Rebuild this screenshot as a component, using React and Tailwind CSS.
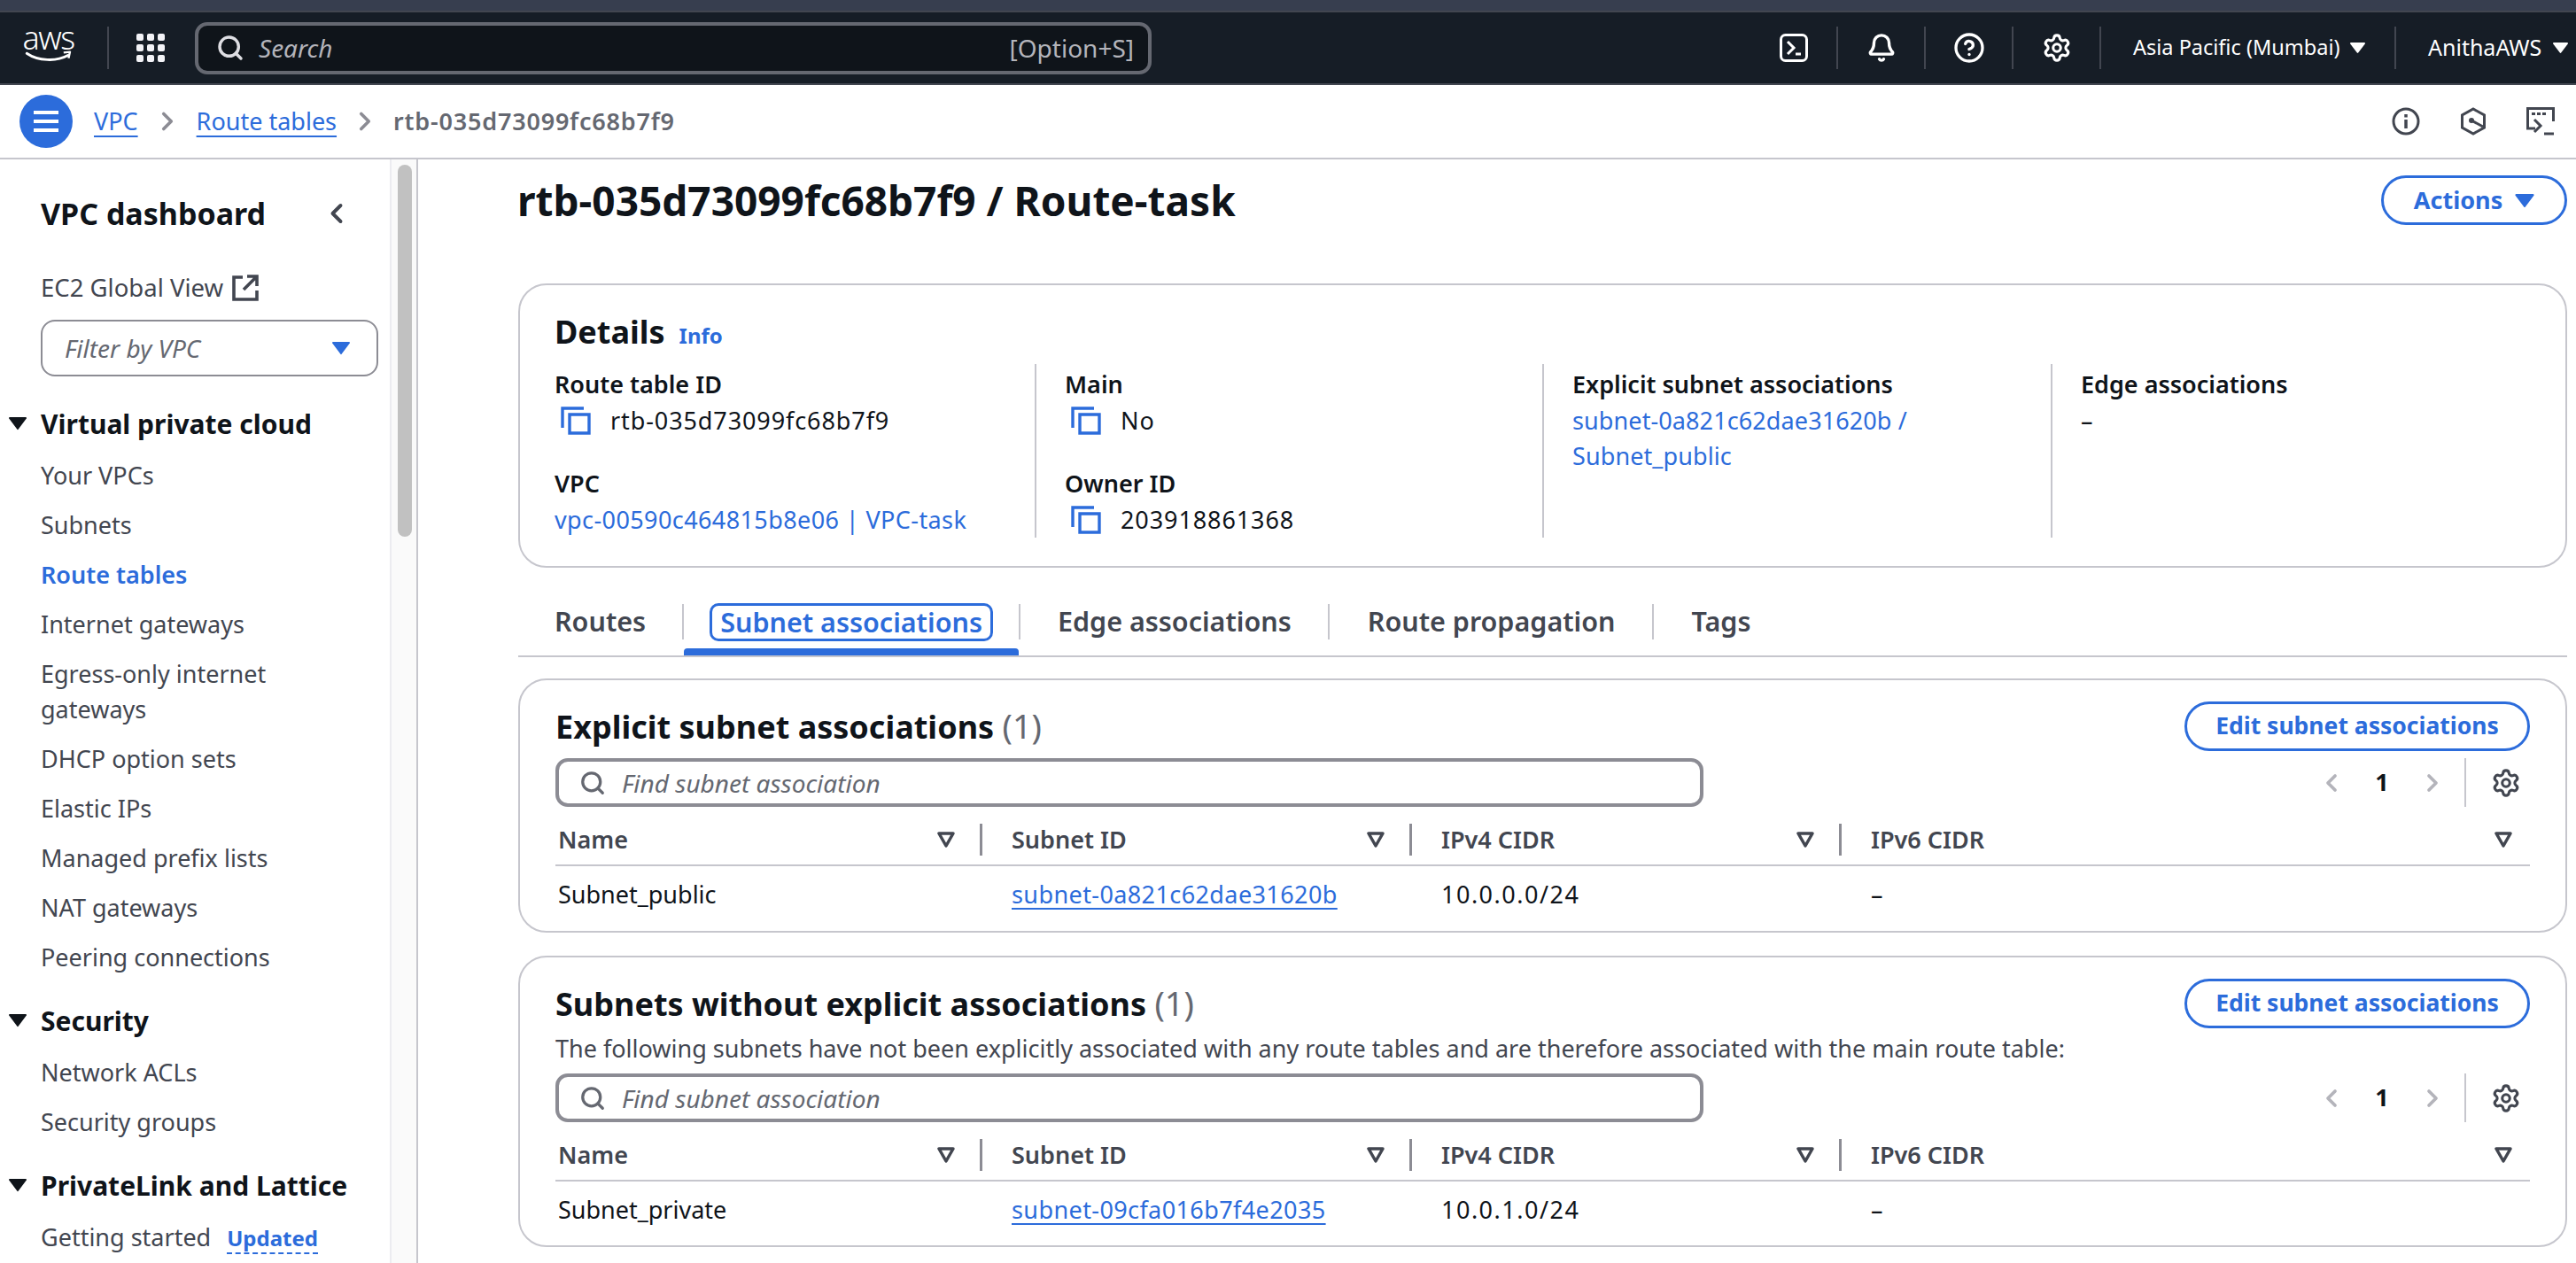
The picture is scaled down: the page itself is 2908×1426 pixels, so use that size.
import { Bell, ChevronLeft, ChevronRight, CircleHelp, Search, Settings } from "lucide-react";

const sideGroups = [
  { title: "Virtual private cloud", items: ["Your VPCs", "Subnets", "Route tables", "Internet gateways", "Egress-only internet gateways", "DHCP option sets", "Elastic IPs", "Managed prefix lists", "NAT gateways", "Peering connections"] },
  { title: "Security", items: ["Network ACLs", "Security groups"] },
  { title: "PrivateLink and Lattice", items: ["Getting started"] },
];

function Caret({ className }) {
  return (
    <svg viewBox="0 0 20 16" className={className} fill="currentColor">
      <path d="M1 1h18a1 1 0 0 1 .8 1.6l-9 12a1 1 0 0 1-1.6 0l-9-12A1 1 0 0 1 1 1z" />
    </svg>
  );
}

function FilterCaret() {
  return (
    <svg viewBox="0 0 20 18" className="w-[20px] h-[18px] text-[#424650]" fill="none" stroke="currentColor" strokeWidth="3.5" strokeLinejoin="round">
      <path d="M2 2h16l-8 14z" />
    </svg>
  );
}

function CopyIcon() {
  return (
    <svg viewBox="0 0 34 32" className="w-[34px] h-[32px] text-[#2c6cdb] shrink-0" fill="none" stroke="currentColor" strokeWidth="3.4">
      <path d="M2 24V2h24" />
      <path d="M10 9h22v21H10z" />
    </svg>
  );
}

function Sidebar() {
  return (
    <aside className="w-[440px] shrink-0 text-[#424650] text-[27px] overflow-hidden">
      <div className="flex items-center justify-between pl-[46px] pr-[42px] pt-[16px] h-[106px]">
        <h2 className="text-[34px] font-bold text-[#0f141a] leading-[48px]">VPC dashboard</h2>
        <ChevronLeft className="w-[36px] h-[36px] text-[#424650]" strokeWidth={2.6} />
      </div>
      <div className="pl-[46px] h-[44px] mt-[17px] flex items-center gap-[10px] leading-[36px] text-[27.5px]">
        EC2 Global View
        <svg viewBox="0 0 30 30" className="w-[30px] h-[30px]" fill="none" stroke="currentColor" strokeWidth="3.6">
          <path d="M12 3H2v25h26V18" />
          <path d="M17 2h11v11M28 2L13 17" />
        </svg>
      </div>
      <div className="ml-[46px] mt-[14px] w-[381px] h-[64px] border-2 border-[#8c8c94] rounded-[16px] flex items-center justify-between pl-[25px] pr-[30px]">
        <span className="italic text-[#656871] text-[28px]">Filter by VPC</span>
        <Caret className="w-[20px] h-[16px] text-[#2c6cdb]" />
      </div>
      <div className="mt-[30px]">
        {sideGroups.map((g) => (
          <div key={g.title} className="mb-[20px]">
            <div className="flex items-center h-[46px] pl-[10px]">
              <Caret className="w-[20px] h-[16px] text-[#0f141a] mr-[16px]" />
              <span className="text-[30px] font-bold text-[#0f141a]">{g.title}</span>
            </div>
            <ul className="mt-[8px] pl-[46px] pr-[60px]">
              {g.items.map((it) => (
                <li key={it} className={`py-[8px] leading-[40px] ${it === "Route tables" ? "text-[#2c6cdb] font-semibold" : ""}`}>
                  {it}
                  {it === "Getting started" && (
                    <span className="ml-[18px] text-[24px] font-bold text-[#2c6cdb] border-b-2 border-dashed border-[#2c6cdb]">Updated</span>
                  )}
                </li>
              ))}
            </ul>
          </div>
        ))}
      </div>
    </aside>
  );
}

function HeaderCell({ label, width, last }) {
  return (
    <div className={`${width} flex items-center h-[36px]`}>
      <span className={`flex-1 text-[27px] font-semibold text-[#424650] ${label === "Name" ? "pl-[3px]" : "pl-[33px]"}`}>{label}</span>
      <span className={last ? "mr-[20px]" : "mr-[28px]"}><FilterCaret /></span>
      {!last && <span className="w-[3px] h-[36px] bg-[#8c8c94]" />}
    </div>
  );
}

function SubnetTable({ title, desc, name, subnet, cidr, cardClass }) {
  return (
    <section className={`border-2 border-[#c6c6cd] rounded-[32px] pl-[40px] pr-[40px] ${cardClass}`}>
      <div className="flex items-start justify-between pt-[24px]">
        <div>
          <h3 className="text-[36px] font-bold text-[#0f141a] leading-[60px] -mt-[3px]">
            {title} <span className="font-normal text-[38px] text-[#656871]">(1)</span>
          </h3>
          {desc && <p className="text-[27px] text-[#424650] leading-[38px] mt-[1px]">{desc}</p>}
        </div>
        <button className="w-[390px] h-[56px] border-[3px] border-[#2c6cdb] rounded-full text-[26.5px] font-bold text-[#2c6cdb] shrink-0">Edit subnet associations</button>
      </div>
      <div className={`flex items-center justify-between ${desc ? "mt-[9px]" : "mt-[5px]"}`}>
        <div className="w-[1296px] h-[55px] border-[4px] border-[#8c8c94] rounded-[14px] flex items-center pl-[23px] gap-[18px]">
          <Search className="w-[30px] h-[30px] text-[#656871]" strokeWidth={2.6} />
          <span className="italic text-[28px] text-[#656871]">Find subnet association</span>
        </div>
        <div className="flex items-center h-[55px]">
          <ChevronLeft className="w-[32px] h-[38px] text-[#b4b4bb]" strokeWidth={2.8} />
          <span className="w-[82px] text-center text-[27px] font-bold text-[#0f141a]">1</span>
          <ChevronRight className="w-[32px] h-[38px] text-[#b4b4bb]" strokeWidth={2.8} />
          <span className="w-[2px] h-[55px] bg-[#c6c6cd] ml-[20px] mr-[28px]" />
          <Settings className="w-[34px] h-[34px] text-[#424650] mr-[10px]" strokeWidth={2.2} />
        </div>
      </div>
      <div className="flex items-center h-[67px] pt-[9px] border-b-2 border-[#c6c6cd]">
        <HeaderCell label="Name" width="w-[482px]" />
        <HeaderCell label="Subnet ID" width="w-[485px]" />
        <HeaderCell label="IPv4 CIDR" width="w-[485px]" />
        <HeaderCell label="IPv6 CIDR" width="flex-1" last />
      </div>
      <div className="flex items-center h-[64px] text-[27px] text-[#0f141a]">
        <div className="w-[482px] pl-[3px]">{name}</div>
        <div className="w-[485px] pl-[33px]"><a className="text-[#2c6cdb] underline underline-offset-[5px] decoration-2 tracking-[0.4px]">{subnet}</a></div>
        <div className="w-[485px] pl-[33px] tracking-[1.5px]">{cidr}</div>
        <div className="flex-1 pl-[33px]">–</div>
      </div>
    </section>
  );
}

function DetailField({ label, children, className }) {
  return (
    <div className={className}>
      <div className="text-[27px] font-semibold text-[#0f141a] leading-[38px]">{label}</div>
      <div className="text-[27px] leading-[40px] mt-[2px] text-[#0f141a]">{children}</div>
    </div>
  );
}

function Copyable({ value }) {
  return (
    <span className="flex items-center gap-[22px] pl-[7px] tracking-[0.9px]">
      <CopyIcon />
      {value}
    </span>
  );
}

export default function App() {
  const tabs = ["Routes", "Subnet associations", "Edge associations", "Route propagation", "Tags"];
  const tabPad = ["pl-[41px]", "pl-[41px]", "pl-[42px]", "pl-[43px]", "pl-[43px]"];
  return (
    <div className="h-[1426px] w-full overflow-hidden bg-white flex flex-col font-['Noto_Sans',sans-serif]">
      <div className="h-[12px] bg-[#373e4f] shrink-0" />
      <header className="h-[84px] shrink-0 bg-[#161d26] border-y-2 border-[#424650] flex items-center text-white">
        <div className="w-[121px] h-full flex flex-col items-center justify-center pr-[12px]">
          <span className="text-[36px] leading-[26px] font-light tracking-[-1.5px] -mt-[6px]">aws</span>
          <svg viewBox="0 0 66 20" className="w-[64px] h-[16px] mt-[1px]" fill="none">
            <path d="M2 4c16 11 42 12 58 3" stroke="white" strokeWidth="3.6" strokeLinecap="round" />
            <path d="M54 3l9-1-2 9" stroke="white" strokeWidth="3" strokeLinejoin="round" />
          </svg>
        </div>
        <span className="w-[2px] h-[48px] bg-[#424650]" />
        <div className="grid grid-cols-3 gap-[4px] w-[32px] ml-[31px] mr-[34px]">
          {[1, 2, 3, 4, 5, 6, 7, 8, 9].map((n) => (
            <span key={n} className="w-[8px] h-[8px] rounded-[2px] bg-[#f3f3f7]" />
          ))}
        </div>
        <div className="w-[1080px] h-[59px] bg-[#0f141a] border-[4px] border-[#656871] rounded-[14px] flex items-center pl-[20px] pr-[16px]">
          <Search className="w-[32px] h-[32px] text-[#dedee3]" strokeWidth={2.6} />
          <span className="italic text-[28px] text-[#b4b4bb] ml-[16px]">Search</span>
          <span className="ml-auto text-[28px] text-[#b4b4bb]">[Option+S]</span>
        </div>
        <div className="flex-1" />
        <div className="flex items-center h-[48px]">
          <div className="w-[99px] h-full border-r-2 border-[#424650] flex items-center justify-center">
            <svg viewBox="0 0 32 32" className="w-[32px] h-[32px]" fill="none" stroke="white" strokeWidth="3">
              <rect x="1.5" y="1.5" width="29" height="29" rx="5" />
              <path d="M9 9l7 7-7 7M18 23h6" />
            </svg>
          </div>
          <div className="w-[99px] h-full border-r-2 border-[#424650] flex items-center justify-center"><Bell className="w-[34px] h-[34px]" strokeWidth={2.4} /></div>
          <div className="w-[99px] h-full border-r-2 border-[#424650] flex items-center justify-center"><CircleHelp className="w-[36px] h-[36px]" strokeWidth={2.2} /></div>
          <div className="w-[99px] h-full border-r-2 border-[#424650] flex items-center justify-center"><Settings className="w-[34px] h-[34px]" strokeWidth={2.2} /></div>
          <div className="w-[333px] h-full border-r-2 border-[#424650] flex items-center pl-[36px] gap-[11px] text-[23.5px]">
            Asia Pacific (Mumbai)
            <Caret className="w-[17px] h-[14px]" />
          </div>
          <div className="w-[203px] h-full flex items-center pl-[36px] gap-[13px] text-[25px]">
            AnithaAWS
            <Caret className="w-[17px] h-[14px]" />
          </div>
        </div>
      </header>
      <div className="h-[84px] shrink-0 border-b-2 border-[#c6c6cd] flex items-center pl-[22px] pr-[24px]">
        <div className="w-[60px] h-[60px] rounded-full bg-[#2c6cdb] flex flex-col items-center justify-center gap-[6px]">
          <span className="w-[28px] h-[4px] bg-white" />
          <span className="w-[28px] h-[4px] bg-white" />
          <span className="w-[28px] h-[4px] bg-white" />
        </div>
        <a className="ml-[24px] text-[27px] text-[#2c6cdb] underline underline-offset-[6px] decoration-2">VPC</a>
        <ChevronRight className="w-[34px] h-[42px] text-[#8c8c94] mx-[16px]" strokeWidth={2.6} />
        <a className="text-[27px] text-[#2c6cdb] underline underline-offset-[6px] decoration-2">Route tables</a>
        <ChevronRight className="w-[34px] h-[42px] text-[#8c8c94] mx-[15px]" strokeWidth={2.6} />
        <span className="text-[27px] font-semibold text-[#656871] tracking-[0.8px]">rtb-035d73099fc68b7f9</span>
        <div className="ml-auto flex items-center gap-[44px] text-[#424650]">
          <svg viewBox="0 0 32 32" className="w-[32px] h-[32px]" fill="none" stroke="currentColor" strokeWidth="3">
            <circle cx="16" cy="16" r="14" />
            <path d="M16 14v10" strokeWidth="3.5" />
            <path d="M16 8v3.5" strokeWidth="3.5" />
          </svg>
          <svg viewBox="0 0 32 32" className="w-[32px] h-[32px]" fill="none" stroke="currentColor" strokeWidth="3">
            <path d="M16 2l12.5 7v14L16 30 3.5 23V9z" />
            <circle cx="14" cy="15" r="3" fill="currentColor" stroke="none" />
            <path d="M14 15l13 7" />
          </svg>
          <svg viewBox="0 0 32 32" className="w-[32px] h-[32px]" fill="none" stroke="currentColor" strokeWidth="3">
            <path d="M10 24H1.5V1.5h29V16" />
            <path d="M6 7.5h4M12 7.5h4M18 7.5h4" />
            <path d="M9 14l7 7-7 7" />
            <path d="M20 30h11" />
          </svg>
        </div>
      </div>
      <div className="flex-1 flex min-h-0">
        <Sidebar />
        <div className="w-[32px] shrink-0 bg-[#fafafa] border-x-2 border-[#ececf0] border-r-[#c6c6cd] px-[7px] pt-[6px]">
          <div className="h-[420px] w-[16px] rounded-full bg-[#c1c1c1]" />
        </div>
        <main className="flex-1 pl-[113px] pr-[10px]">
          <div className="h-[140px] flex items-start justify-between">
            <h1 className="text-[46px] font-bold text-[#0f141a] leading-[64px] mt-[14px] -ml-[1px]">rtb-035d73099fc68b7f9 / Route-task</h1>
            <button className="w-[210px] h-[56px] mt-[18px] border-[3px] border-[#2c6cdb] rounded-full text-[27px] font-bold text-[#2c6cdb] flex items-center justify-center gap-[14px]">
              Actions
              <Caret className="w-[22px] h-[17px]" />
            </button>
          </div>
          <section className="h-[321px] border-2 border-[#c6c6cd] rounded-[32px] pl-[39px] pt-[28px]">
            <div className="flex items-baseline gap-[16px]">
              <h2 className="text-[36px] font-bold text-[#0f141a] leading-[50px]">Details</h2>
              <a className="text-[24px] font-bold text-[#2c6cdb]">Info</a>
            </div>
            <div className="grid grid-cols-[544px_573px_574px_1fr] mt-[15px] h-[192px]">
              <div className="border-r-2 border-[#c6c6cd] flex flex-col gap-[32px] -mt-[4px] pt-[4px]">
                <DetailField label="Route table ID"><Copyable value="rtb-035d73099fc68b7f9" /></DetailField>
                <DetailField label="VPC"><a className="text-[#2c6cdb] tracking-[0.4px]">vpc-00590c464815b8e06 | VPC-task</a></DetailField>
              </div>
              <div className="border-r-2 border-[#c6c6cd] pl-[32px] flex flex-col gap-[32px] -mt-[4px] pt-[4px]">
                <DetailField label="Main"><Copyable value="No" /></DetailField>
                <DetailField label="Owner ID"><Copyable value="203918861368" /></DetailField>
              </div>
              <div className="border-r-2 border-[#c6c6cd] pl-[32px] -mt-[4px] pt-[4px]">
                <DetailField label="Explicit subnet associations">
                  <a className="text-[#2c6cdb] tracking-[0.1px]">subnet-0a821c62dae31620b /<br />Subnet_public</a>
                </DetailField>
              </div>
              <div className="pl-[32px] -mt-[4px] pt-[4px]">
                <DetailField label="Edge associations">–</DetailField>
              </div>
            </div>
          </section>
          <div className="h-[101px] border-b-2 border-[#c6c6cd] flex items-start pt-[41px] relative">
            {tabs.map((t, i) => (
              <div key={t} className={`h-[40px] flex items-center pr-[41px] text-[30.5px] font-semibold ${tabPad[i]} ${i < tabs.length - 1 ? "border-r-2 border-[#c6c6cd]" : ""} ${i === 1 ? "text-[#2c6cdb]" : "text-[#424650]"}`}>
                <span className={i === 1 ? "border-[3px] border-[#2c6cdb] rounded-[10px] px-[9px] -mx-[12px] h-[43px] leading-[36px]" : ""}>{t}</span>
              </div>
            ))}
            <span className="absolute left-[187px] bottom-0 w-[378px] h-[8px] bg-[#2c6cdb] rounded-t-[4px]" />
          </div>
          <SubnetTable cardClass="mt-[24px] h-[287px]" title="Explicit subnet associations" name="Subnet_public" subnet="subnet-0a821c62dae31620b" cidr="10.0.0.0/24" />
          <SubnetTable cardClass="mt-[26px] h-[329px]" title="Subnets without explicit associations" desc="The following subnets have not been explicitly associated with any route tables and are therefore associated with the main route table:" name="Subnet_private" subnet="subnet-09cfa016b7f4e2035" cidr="10.0.1.0/24" />
        </main>
      </div>
    </div>
  );
}
